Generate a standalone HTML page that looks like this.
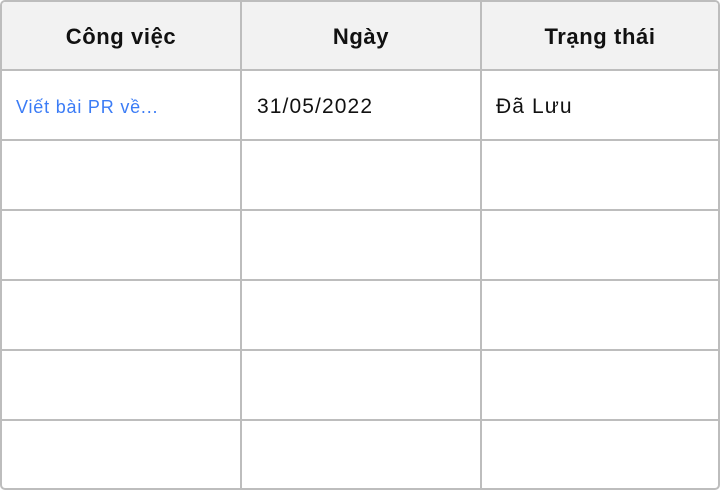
<!DOCTYPE html>
<html><head><meta charset="utf-8"><style>
html,body{margin:0;padding:0;background:#fff;}
#t{position:relative;width:716px;height:486px;border:2px solid #bdbdbd;border-radius:5px;overflow:hidden;font-family:"Liberation Sans","DejaVu Sans",sans-serif;}
.hd{position:absolute;left:0;top:0;width:716px;height:67px;background:#f2f2f2;}
.h{position:absolute;height:2px;left:0;width:716px;background:#bdbdbd;}
.v{position:absolute;width:2px;top:0;height:486px;background:#bdbdbd;}
.th{position:absolute;top:1px;height:67px;line-height:67px;text-align:center;font-weight:bold;font-size:22px;letter-spacing:0.6px;color:#111;}
.td{position:absolute;top:71px;height:68px;line-height:68px;font-size:21px;letter-spacing:1.1px;color:#111;}
</style></head><body>
<div id="t">
<div class="hd"></div>
<div class="h" style="top:67px"></div>
<div class="h" style="top:137px"></div>
<div class="h" style="top:207px"></div>
<div class="h" style="top:277px"></div>
<div class="h" style="top:347px"></div>
<div class="h" style="top:417px"></div>
<div class="v" style="left:238px"></div>
<div class="v" style="left:478px"></div>
<div class="th" style="left:0;width:238px">Công việc</div>
<div class="th" style="left:240px;width:238px">Ngày</div>
<div class="th" style="left:480px;width:236px">Trạng thái</div>
<div class="td" style="left:14px;font-size:18px;letter-spacing:0.8px;color:#3b7cf6">Viết bài PR về...</div>
<div class="td" style="left:255px">31/05/2022</div>
<div class="td" style="left:494px">Đã Lưu</div>
</div>
</body></html>
